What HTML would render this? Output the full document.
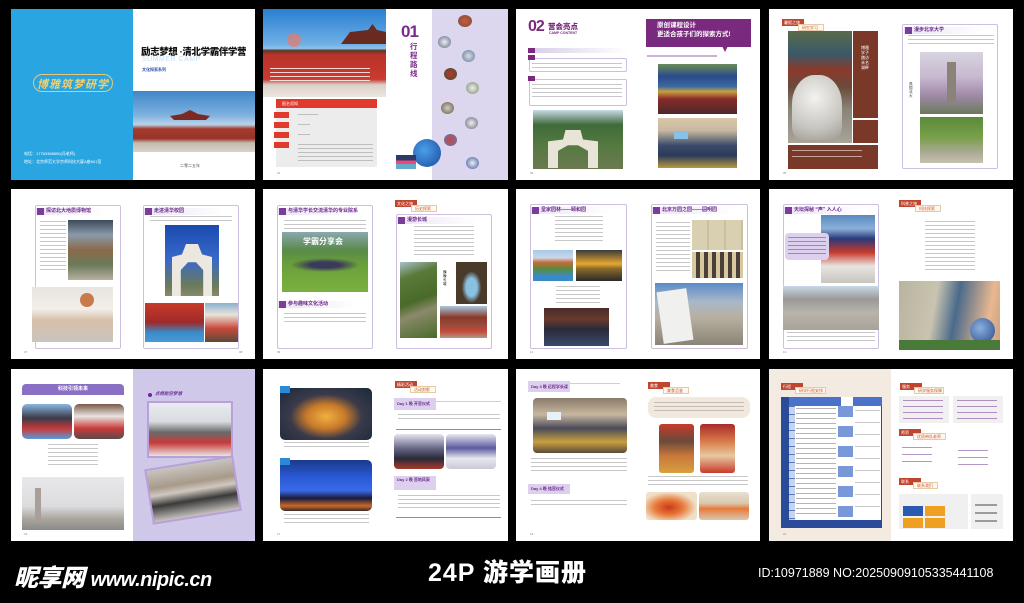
<!DOCTYPE html>
<html><head><meta charset="utf-8">
<style>
*{margin:0;padding:0;box-sizing:border-box}
body{width:1024px;height:603px;background:#000;position:relative;overflow:hidden;font-family:"Liberation Sans","Noto Sans CJK SC",sans-serif}
.a{position:absolute}
.pg{position:absolute;background:#fff}
.ln{position:absolute;background:repeating-linear-gradient(#999 0 1px,transparent 1px 4px);opacity:.55}
.fr{position:absolute;border:1px solid #cdbfe0;background:#fff;border-radius:2px}
.hd{position:absolute;height:7px;background:linear-gradient(90deg,#ece4f4,rgba(255,255,255,0));font-size:5px;line-height:7px;color:#6a2a8a;font-weight:bold;padding-left:10px;white-space:nowrap}
.hd:before{content:"";position:absolute;left:1px;top:0;width:7px;height:7px;background:#7a3e9a}
.tag{position:absolute;width:22px;height:7px;background:#c0452e;font-size:4px;color:#fff;line-height:7px;padding-left:2px}
.tag2{position:absolute;height:7px;border:1px solid #e7c9a6;background:#fff8ee;font-size:4px;color:#c06030;line-height:5px;padding-left:3px;width:26px}
.num{position:absolute;font-size:3px;color:#888}
.cn{font-family:"Liberation Sans","Noto Sans CJK SC",sans-serif}
</style></head><body>

<!-- S1 -->
<div class="pg" style="left:11px;top:9px;width:244px;height:171px"></div>
<div class="a" style="left:11px;top:9px;width:122px;height:171px;background:#29a6e1"></div>
<div class="a" style="left:33px;top:74px;width:80px;height:18px;border:1px solid #e8c878;border-radius:9px"></div>
<div class="a cn" style="left:37px;top:76px;width:72px;text-align:center;font-size:11px;color:#f5d06a;font-weight:bold;font-style:italic;letter-spacing:1px">博雅筑梦研学</div>
<div class="a cn" style="left:24px;top:150px;font-size:4px;color:#fff;line-height:8px">电话：17763388890(冯老师)<br>地址：北京师范大学京师科技大厦A座601室</div>
<div class="a cn" style="left:141px;top:44px;font-size:9.5px;font-weight:900;color:#111;white-space:nowrap;letter-spacing:-.4px">励志梦想 ·清北学霸伴学营</div>
<div class="a" style="left:142px;top:56px;font-size:7px;color:#c5dcf2;letter-spacing:.5px">SUMMER CAMP</div>
<div class="a cn" style="left:142px;top:67px;font-size:4px;color:#1f4fa8;font-weight:bold">文化探索系列</div>
<div class="a" style="left:133px;top:91px;width:122px;height:61px;background:linear-gradient(180deg,#3f86c8 0%,#7fb2de 40%,#b9d3ea 55%,#a43b2e 62%,#9a3328 78%,#c2bbb0 85%,#d8d2c8 100%)"></div>
<div class="a" style="left:170px;top:110px;width:40px;height:10px;background:#7a2a22;clip-path:polygon(10% 100%,0 60%,30% 40%,50% 0,70% 40%,100% 60%,90% 100%)"></div>
<div class="a cn" style="left:180px;top:163px;font-size:4px;color:#555">二零二五年</div>

<!-- S2 -->
<div class="pg" style="left:263px;top:9px;width:245px;height:171px"></div>
<div class="a" style="left:263px;top:9px;width:123px;height:88px;background:linear-gradient(180deg,#2a7fd0 0%,#6fb0e6 40%,#8fc2ea 45%,#5a3a2a 47%,#b8332a 52%,#cc3a2e 80%,#d9d0c8 86%,#ece6e0 100%)"></div>
<div class="a" style="left:341px;top:24px;width:45px;height:20px;background:#6b2a20;clip-path:polygon(0 100%,20% 40%,60% 30%,70% 0,80% 30%,100% 40%,100% 100%)"></div>
<div class="a" style="left:287px;top:33px;width:14px;height:14px;border-radius:50%;background:#e87a6a;opacity:.7"></div>
<div class="ln" style="left:270px;top:68px;width:100px;height:14px;background:repeating-linear-gradient(#fff 0 1px,transparent 1px 4px);opacity:.8"></div>
<div class="a" style="left:276px;top:99px;width:101px;height:9px;background:#e03a2c;font-size:4px;color:#fff;line-height:9px;padding-left:6px">报名须知</div>
<div class="a" style="left:276px;top:108px;width:101px;height:59px;background:#ececec"></div>
<div class="a" style="left:274px;top:112px;width:15px;height:6px;background:#e03a2c"></div>
<div class="a" style="left:274px;top:122px;width:15px;height:6px;background:#e03a2c"></div>
<div class="a" style="left:274px;top:132px;width:15px;height:6px;background:#e03a2c"></div>
<div class="a" style="left:274px;top:142px;width:15px;height:6px;background:#e03a2c"></div>
<div class="ln" style="left:298px;top:114px;width:20px;height:2px"></div>
<div class="ln" style="left:298px;top:124px;width:12px;height:2px"></div>
<div class="ln" style="left:298px;top:134px;width:12px;height:2px"></div>
<div class="ln" style="left:298px;top:144px;width:75px;height:20px"></div>
<div class="a" style="left:401px;top:22px;font-size:17px;font-weight:900;color:#7a2a8e;letter-spacing:-1px">01</div>
<div class="a cn" style="left:410px;top:42px;width:8px;font-size:7.5px;line-height:9px;font-weight:bold;color:#7a2a8e">行程路线</div>
<div class="a" style="left:432px;top:9px;width:76px;height:171px;background:#dcd6ee"></div>
<div class="a" style="left:458px;top:15px;width:14px;height:12px;border-radius:50%;background:radial-gradient(#c85a3a,#7a5040)"></div>
<div class="a" style="left:438px;top:36px;width:13px;height:12px;border-radius:50%;background:radial-gradient(#eee,#5a6a8a)"></div>
<div class="a" style="left:462px;top:50px;width:13px;height:12px;border-radius:50%;background:radial-gradient(#ddd,#5a7aa0)"></div>
<div class="a" style="left:444px;top:68px;width:13px;height:12px;border-radius:50%;background:radial-gradient(#b33,#3a5a2a)"></div>
<div class="a" style="left:466px;top:82px;width:13px;height:12px;border-radius:50%;background:radial-gradient(#eee,#7a8a6a)"></div>
<div class="a" style="left:441px;top:102px;width:13px;height:12px;border-radius:50%;background:radial-gradient(#ccc,#6a5a3a)"></div>
<div class="a" style="left:465px;top:117px;width:13px;height:12px;border-radius:50%;background:radial-gradient(#eee,#6a6a7a)"></div>
<div class="a" style="left:444px;top:134px;width:13px;height:12px;border-radius:50%;background:radial-gradient(#c44,#5a7ab0)"></div>
<div class="a" style="left:466px;top:157px;width:13px;height:12px;border-radius:50%;background:radial-gradient(#eee,#3a5aa0)"></div>
<div class="a" style="left:413px;top:139px;width:28px;height:28px;border-radius:50%;background:radial-gradient(circle at 40% 40%,#4aa0e8,#1a4aa0)"></div>
<div class="a" style="left:396px;top:155px;width:20px;height:14px;background:linear-gradient(#2a3a6a 0 40%,#e84a7a 40% 65%,#6ac 65%)"></div>

<!-- S3 -->
<div class="pg" style="left:516px;top:9px;width:244px;height:171px"></div>
<div class="a" style="left:528px;top:18px;font-size:16px;font-weight:900;color:#7a2a7e;letter-spacing:-1px">02</div>
<div class="a cn" style="left:548px;top:21px;font-size:7.5px;font-weight:900;color:#7a2a7e">营会亮点</div>
<div class="a" style="left:549px;top:31px;font-size:3.5px;font-weight:bold;color:#7a2a7e">CAMP CONTENT</div>
<div class="a" style="left:528px;top:48px;width:100px;height:5px;background:linear-gradient(90deg,#d8cce8,#fff)"></div>
<div class="a" style="left:528px;top:48px;width:7px;height:5px;background:#7a2a7e"></div>
<div class="fr" style="left:529px;top:58px;width:98px;height:14px"></div>
<div class="a" style="left:528px;top:55px;width:7px;height:5px;background:#7a2a7e"></div>
<div class="ln" style="left:532px;top:63px;width:90px;height:6px"></div>
<div class="fr" style="left:529px;top:79px;width:98px;height:27px"></div>
<div class="a" style="left:528px;top:76px;width:7px;height:5px;background:#7a2a7e"></div>
<div class="ln" style="left:532px;top:84px;width:90px;height:15px"></div>
<div class="a" style="left:533px;top:110px;width:90px;height:59px;background:linear-gradient(180deg,#c8dbe8 0%,#3f6a3a 25%,#557a40 60%,#6a7a50 100%)"></div>
<div class="a" style="left:548px;top:130px;width:50px;height:38px;background:#e8e4d8;clip-path:polygon(0 100%,0 30%,30% 25%,35% 0,65% 0,70% 25%,100% 30%,100% 100%,80% 100%,80% 55%,60% 40%,40% 40%,20% 55%,20% 100%)"></div>
<div class="a" style="left:646px;top:19px;width:105px;height:28px;background:#7a2a7e"></div>
<div class="a" style="left:722px;top:46px;width:6px;height:6px;background:#7a2a7e;clip-path:polygon(0 0,100% 0,50% 100%)"></div>
<div class="a cn" style="left:657px;top:21px;font-size:6.5px;line-height:9px;font-weight:bold;color:#fff">原创课程设计<br>更适合孩子们的探索方式!</div>
<div class="ln" style="left:647px;top:55px;width:70px;height:2px;background:#a070b8"></div>
<div class="a" style="left:658px;top:64px;width:79px;height:50px;background:linear-gradient(180deg,#6a8a5a 0%,#2a4a8a 25%,#3a6aa0 45%,#c8a040 55%,#8a2a2a 70%,#4a2a2a 100%)"></div>
<div class="a" style="left:658px;top:118px;width:79px;height:50px;background:linear-gradient(180deg,#d8c8a8 0%,#c8b8a0 25%,#3a4a6a 55%,#2a3a5a 75%,#b89a40 100%)"></div>
<div class="a" style="left:674px;top:132px;width:14px;height:7px;background:#8ac0e8"></div>

<!-- S4 -->
<div class="pg" style="left:769px;top:9px;width:244px;height:171px"></div>
<div class="tag" style="left:782px;top:19px">暑假之旅</div>
<div class="tag2" style="left:798px;top:24px">研究学习</div>
<div class="a" style="left:788px;top:31px;width:64px;height:112px;background:linear-gradient(180deg,#5a6a4a 0%,#3a5a6a 20%,#8a3a2a 35%,#6a4a3a 50%,#8a8478 70%,#a8a498 100%)"></div>
<div class="a" style="left:792px;top:75px;width:50px;height:65px;border-radius:45% 45% 20% 20%;background:radial-gradient(circle at 45% 35%,#f2f2f0,#c8c6c0 60%,#9a9890)"></div>
<div class="a" style="left:853px;top:31px;width:25px;height:87px;background:#7a3828"></div>
<div class="a cn" style="left:861px;top:45px;width:10px;font-size:4px;line-height:5px;color:#fff">博雅学子踏访未名湖畔</div>
<div class="a" style="left:853px;top:120px;width:25px;height:23px;background:#7a3828"></div>
<div class="a" style="left:788px;top:145px;width:90px;height:24px;background:#7a3828"></div>
<div class="ln" style="left:792px;top:150px;width:70px;height:8px;background:repeating-linear-gradient(#fff 0 1px,transparent 1px 6px)"></div>
<div class="fr" style="left:902px;top:24px;width:96px;height:145px"></div>
<div class="hd" style="left:904px;top:27px;width:80px">漫步北京大学</div>
<div class="ln" style="left:908px;top:35px;width:86px;height:10px"></div>
<div class="a" style="left:920px;top:52px;width:63px;height:62px;background:linear-gradient(180deg,#d8d4e0 0%,#c8b8d0 40%,#a08aa8 70%,#6a7a5a 100%)"></div>
<div class="a" style="left:947px;top:62px;width:9px;height:40px;background:#8a8478"></div>
<div class="a" style="left:920px;top:117px;width:63px;height:46px;background:linear-gradient(180deg,#5a8a3a 0%,#7aa04a 45%,#a8a890 75%,#c8c0b0 100%)"></div>
<div class="a cn" style="left:909px;top:82px;width:5px;font-size:3.5px;line-height:4px;color:#333">燕园北大</div>

<!-- S5 -->
<div class="pg" style="left:11px;top:189px;width:244px;height:170px"></div>
<div class="fr" style="left:35px;top:205px;width:86px;height:144px"></div>
<div class="hd" style="left:36px;top:208px;width:70px">探访北大地质博物馆</div>
<div class="ln" style="left:40px;top:221px;width:26px;height:52px"></div>
<div class="a" style="left:68px;top:220px;width:45px;height:60px;background:linear-gradient(180deg,#3a4a5a 0%,#8a9aa8 25%,#8a6a4a 50%,#6a7a5a 75%,#b8b0a0 100%)"></div>
<div class="a" style="left:32px;top:287px;width:81px;height:55px;background:linear-gradient(180deg,#e8e4e0 0%,#f2eeea 40%,#d8c0a8 60%,#c8c4c0 100%)"></div>
<div class="a" style="left:80px;top:293px;width:14px;height:14px;border-radius:50%;background:#c87a4a"></div>
<div class="fr" style="left:143px;top:205px;width:96px;height:144px"></div>
<div class="hd" style="left:144px;top:208px;width:80px">走进清华校园</div>
<div class="ln" style="left:150px;top:216px;width:82px;height:6px"></div>
<div class="a" style="left:165px;top:225px;width:54px;height:71px;background:linear-gradient(180deg,#1a4ab0 0%,#3a6ac8 50%,#6a7a5a 85%,#8a8a6a 100%)"></div>
<div class="a" style="left:172px;top:244px;width:40px;height:52px;background:#ece8e0;clip-path:polygon(0 100%,0 25%,25% 20%,35% 0,65% 0,75% 20%,100% 25%,100% 100%,78% 100%,78% 50%,60% 35%,40% 35%,22% 50%,22% 100%)"></div>
<div class="a" style="left:145px;top:303px;width:59px;height:39px;background:linear-gradient(180deg,#c83a2a 0%,#a02a2a 50%,#3a8ac8 75%,#4a9ad8 100%)"></div>
<div class="a" style="left:205px;top:303px;width:33px;height:39px;background:linear-gradient(180deg,#8ab0d0 0%,#e8e4d8 30%,#c84a3a 65%,#5a4a3a 100%)"></div>

<!-- S6 -->
<div class="pg" style="left:263px;top:189px;width:245px;height:170px"></div>
<div class="fr" style="left:277px;top:205px;width:96px;height:144px"></div>
<div class="hd" style="left:278px;top:208px;width:80px">与清华学长交流清华的专业院系</div>
<div class="ln" style="left:284px;top:220px;width:82px;height:9px"></div>
<div class="a" style="left:282px;top:232px;width:86px;height:60px;background:linear-gradient(180deg,#8aa8b0 0%,#5a8a4a 30%,#6aa03a 55%,#7ab040 100%)"></div>
<div class="a cn" style="left:303px;top:236px;font-size:8px;color:#fff;font-weight:bold">学霸分享会</div>
<div class="a" style="left:290px;top:258px;width:70px;height:14px;background:radial-gradient(ellipse,#3a3a5a 30%,rgba(0,0,0,0) 70%)"></div>
<div class="hd" style="left:278px;top:301px;width:80px">参与趣味文化活动</div>
<div class="ln" style="left:284px;top:313px;width:82px;height:12px"></div>
<div class="tag" style="left:395px;top:200px">文化之旅</div>
<div class="tag2" style="left:411px;top:205px">历史探索</div>
<div class="fr" style="left:396px;top:214px;width:96px;height:135px"></div>
<div class="hd" style="left:397px;top:217px;width:80px">漫游长城</div>
<div class="ln" style="left:414px;top:226px;width:60px;height:30px"></div>
<div class="a" style="left:400px;top:262px;width:37px;height:76px;background:linear-gradient(160deg,#a8c0c8 0%,#5a7a3a 20%,#4a6a2a 50%,#8a8a6a 65%,#4a6a2a 100%)"></div>
<div class="a" style="left:456px;top:262px;width:31px;height:42px;background:radial-gradient(ellipse at 50% 60%,#8ac0e0 25%,#4a3a2a 45%)"></div>
<div class="a" style="left:440px;top:306px;width:47px;height:32px;background:linear-gradient(180deg,#a8c8e0 0%,#8a3a2a 35%,#9a4a3a 60%,#c84a3a 80%,#a89a8a 100%)"></div>
<div class="a cn" style="left:443px;top:270px;width:5px;font-size:3.5px;line-height:4px">巍巍长城</div>

<!-- S7 -->
<div class="pg" style="left:516px;top:189px;width:244px;height:170px"></div>
<div class="fr" style="left:530px;top:204px;width:97px;height:145px"></div>
<div class="hd" style="left:531px;top:207px;width:80px">皇家园林——颐和园</div>
<div class="ln" style="left:555px;top:216px;width:48px;height:28px"></div>
<div class="a" style="left:533px;top:250px;width:40px;height:31px;background:linear-gradient(180deg,#a8c8e8 0%,#c8d8e8 25%,#c86a3a 40%,#5a8a3a 60%,#3a8ac8 85%)"></div>
<div class="a" style="left:576px;top:250px;width:46px;height:31px;background:linear-gradient(180deg,#3a3a3a 0%,#e8a830 45%,#8a6a2a 60%,#2a2a2a 100%)"></div>
<div class="ln" style="left:556px;top:286px;width:44px;height:18px"></div>
<div class="a" style="left:544px;top:308px;width:65px;height:38px;background:linear-gradient(180deg,#4a2a2a 0%,#6a3a2a 30%,#2a2a3a 55%,#3a4a6a 100%)"></div>
<div class="fr" style="left:651px;top:204px;width:97px;height:145px"></div>
<div class="hd" style="left:652px;top:207px;width:80px">北京万园之园——圆明园</div>
<div class="ln" style="left:656px;top:222px;width:34px;height:50px"></div>
<div class="a" style="left:692px;top:220px;width:51px;height:30px;background:repeating-linear-gradient(90deg,#d8d0b0 0 15px,#c8c0a0 15px 17px)"></div>
<div class="a" style="left:692px;top:252px;width:51px;height:26px;background:repeating-linear-gradient(90deg,#d8c8a0 0 4px,#4a4038 4px 8px)"></div>
<div class="a" style="left:655px;top:283px;width:88px;height:62px;background:linear-gradient(180deg,#5a8ac8 0%,#a8b8c8 30%,#b8b0a0 55%,#8a8478 100%)"></div>
<div class="a" style="left:660px;top:290px;width:30px;height:52px;background:#f0f0ee;transform:rotate(-8deg)"></div>

<!-- S8 -->
<div class="pg" style="left:769px;top:189px;width:244px;height:170px"></div>
<div class="fr" style="left:783px;top:204px;width:96px;height:145px"></div>
<div class="hd" style="left:784px;top:207px;width:80px">天坛探秘 “声” 入人心</div>
<div class="a" style="left:821px;top:215px;width:54px;height:68px;background:linear-gradient(180deg,#5a8ac0 0%,#8ab0d8 20%,#2a3a7a 35%,#c83a2a 55%,#e8e4e0 75%,#c8c4c0 100%)"></div>
<div class="a" style="left:785px;top:233px;width:44px;height:27px;background:#dcd0ee;border-radius:4px"></div>
<div class="ln" style="left:788px;top:237px;width:38px;height:18px;background:repeating-linear-gradient(#7a3e9a 0 1px,transparent 1px 4px)"></div>
<div class="a" style="left:783px;top:286px;width:96px;height:44px;background:linear-gradient(180deg,#c8d8e8 0%,#9a9a98 30%,#b8b4ac 60%,#a8a49c 100%)"></div>
<div class="ln" style="left:787px;top:332px;width:88px;height:12px"></div>
<div class="tag" style="left:899px;top:200px">科普之旅</div>
<div class="tag2" style="left:915px;top:205px">科技探索</div>
<div class="ln" style="left:925px;top:221px;width:50px;height:52px"></div>
<div class="a" style="left:899px;top:281px;width:101px;height:69px;background:linear-gradient(100deg,#b8b4a0 0%,#c8c4b0 35%,#4a6a8a 55%,#e8b890 85%,#c8a080 100%)"></div>
<div class="a" style="left:970px;top:318px;width:25px;height:25px;border-radius:50%;background:radial-gradient(circle at 40% 40%,#8ab0e0,#2a4a8a)"></div>
<div class="a" style="left:899px;top:340px;width:101px;height:10px;background:#4a7a3a"></div>

<!-- S9 -->
<div class="pg" style="left:11px;top:369px;width:244px;height:172px"></div>
<div class="a" style="left:133px;top:369px;width:122px;height:172px;background:#d0c8e8"></div>
<div class="a cn" style="left:22px;top:384px;width:102px;height:11px;background:#8a70c4;border-radius:4px 4px 0 0;color:#fff;font-size:5px;line-height:11px;text-align:center;font-weight:bold">科技引领未来</div>
<div class="a" style="left:22px;top:404px;width:50px;height:35px;border-radius:5px;background:linear-gradient(180deg,#8ab8e0 0%,#3a3a4a 40%,#c83a3a 70%,#5a9ad8 100%)"></div>
<div class="a" style="left:74px;top:404px;width:50px;height:35px;border-radius:5px;background:linear-gradient(180deg,#7a5a4a 0%,#e8e4e0 35%,#c83a3a 70%,#5a4a4a 100%)"></div>
<div class="ln" style="left:48px;top:444px;width:50px;height:24px"></div>
<div class="a" style="left:22px;top:477px;width:102px;height:53px;background:linear-gradient(180deg,#e8e8ea 0%,#dcdcde 55%,#a8a49c 80%,#8a8a88 100%)"></div>
<div class="a" style="left:35px;top:488px;width:6px;height:35px;background:#a8a098"></div>
<div class="a" style="left:148px;top:393px;width:4px;height:4px;border-radius:50%;background:#6a2a9a"></div>
<div class="a cn" style="left:155px;top:391px;font-size:4.5px;font-weight:bold;color:#6a2a9a;font-style:italic">点燃航空梦想</div>
<div class="a" style="left:147px;top:401px;width:86px;height:57px;background:#b8a0d8;padding:2px"><div style="width:100%;height:100%;background:linear-gradient(180deg,#e8ecf0 0%,#d8dce0 35%,#6a6a6a 55%,#c83a3a 75%,#e8e4e0 100%)"></div></div>
<div class="a" style="left:148px;top:462px;width:90px;height:56px;background:#b8a0d8;padding:2px;transform:rotate(-9deg)"><div style="width:100%;height:100%;background:linear-gradient(180deg,#c8c4c0 0%,#a89a8a 35%,#d0c8c0 50%,#3a3a3a 70%,#c8c4c0 100%)"></div></div>

<!-- S10 -->
<div class="pg" style="left:263px;top:369px;width:245px;height:172px"></div>
<div class="a" style="left:280px;top:388px;width:92px;height:52px;border-radius:5px;background:radial-gradient(ellipse at 50% 55%,#f0b040 0%,#c87a2a 30%,#3a3a4a 55%,#1a2a3a 100%)"></div>
<div class="a" style="left:280px;top:386px;width:10px;height:7px;background:#2a8ad8"></div>
<div class="ln" style="left:284px;top:442px;width:85px;height:7px"></div>
<div class="a" style="left:280px;top:460px;width:92px;height:51px;border-radius:5px;background:linear-gradient(180deg,#1a3a8a 0%,#2a5ad8 35%,#3a6ae8 60%,#1a1a3a 75%,#c86a2a 90%,#3a2a2a 100%)"></div>
<div class="a" style="left:280px;top:458px;width:10px;height:7px;background:#2a8ad8"></div>
<div class="ln" style="left:284px;top:514px;width:85px;height:11px"></div>
<div class="tag" style="left:395px;top:381px">精彩活动</div>
<div class="tag2" style="left:410px;top:386px">活动剪影</div>
<div class="a cn" style="left:394px;top:398px;width:42px;height:12px;background:#ddd0ee;font-size:4px;line-height:12px;color:#6a2a8a;padding-left:3px;font-weight:bold">Day 1 晚 开营仪式</div>
<div class="a" style="left:436px;top:401px;width:65px;height:1px;background:#d8c8e8"></div>
<div class="ln" style="left:398px;top:414px;width:102px;height:8px"></div>
<div class="a" style="left:396px;top:429px;width:105px;height:1px;background:#a878c8"></div>
<div class="a" style="left:394px;top:434px;width:50px;height:35px;border-radius:4px;background:linear-gradient(180deg,#e8e4f0 0%,#6a6a8a 40%,#2a2a3a 70%,#a83a2a 100%)"></div>
<div class="a" style="left:446px;top:434px;width:50px;height:35px;border-radius:4px;background:linear-gradient(180deg,#e8e8f0 0%,#5a5aa0 40%,#e8e8f0 70%,#c8c8d8 100%)"></div>
<div class="a cn" style="left:394px;top:476px;width:42px;height:14px;background:#ddd0ee;font-size:4px;line-height:6px;color:#6a2a8a;padding:1px 3px;font-weight:bold">Day 2 晚 营地风采</div>
<div class="ln" style="left:398px;top:495px;width:102px;height:15px"></div>
<div class="a" style="left:396px;top:517px;width:105px;height:1px;background:#a878c8"></div>

<!-- S11 -->
<div class="pg" style="left:516px;top:369px;width:244px;height:172px"></div>
<div class="a cn" style="left:528px;top:381px;width:42px;height:11px;background:#ddd0ee;font-size:4px;line-height:11px;color:#6a2a8a;padding-left:3px;font-weight:bold">Day 3 晚 远程学长课</div>
<div class="a" style="left:570px;top:383px;width:50px;height:1px;background:#d8c8e8"></div>
<div class="a" style="left:533px;top:398px;width:94px;height:55px;border-radius:4px;background:linear-gradient(180deg,#8a7a6a 0%,#c8b8a0 30%,#4a4a5a 55%,#c8a040 80%,#5a4a3a 100%)"></div>
<div class="a" style="left:547px;top:412px;width:14px;height:8px;background:#e8f0f8"></div>
<div class="ln" style="left:531px;top:458px;width:96px;height:14px"></div>
<div class="a cn" style="left:528px;top:484px;width:42px;height:10px;background:#ddd0ee;font-size:4px;line-height:10px;color:#6a2a8a;padding-left:3px;font-weight:bold">Day 4 晚 结营仪式</div>
<div class="ln" style="left:531px;top:500px;width:96px;height:8px"></div>
<div class="tag" style="left:648px;top:382px">美食</div>
<div class="tag2" style="left:663px;top:387px">美食品鉴</div>
<div class="a" style="left:648px;top:397px;width:102px;height:21px;background:#f2e8de;border-radius:8px"></div>
<div class="ln" style="left:654px;top:402px;width:90px;height:12px"></div>
<div class="a" style="left:659px;top:424px;width:35px;height:49px;border-radius:3px;background:linear-gradient(180deg,#c83a2a 0%,#6a4a3a 35%,#c8783a 65%,#d8a040 100%)"></div>
<div class="a" style="left:700px;top:424px;width:35px;height:49px;border-radius:3px;background:linear-gradient(180deg,#a82a2a 0%,#d87a4a 35%,#e8c8a0 65%,#c83a2a 100%)"></div>
<div class="ln" style="left:648px;top:476px;width:100px;height:10px"></div>
<div class="a" style="left:646px;top:492px;width:51px;height:28px;border-radius:3px;background:radial-gradient(ellipse at 45% 55%,#c83a1a 0%,#e87a3a 35%,#f0e0c8 70%)"></div>
<div class="a" style="left:699px;top:492px;width:50px;height:28px;border-radius:3px;background:linear-gradient(180deg,#e8e0d0 0%,#d8c8b0 40%,#e87a3a 60%,#d8c8b0 100%)"></div>

<!-- S12 -->
<div class="pg" style="left:769px;top:369px;width:244px;height:172px"></div>
<div class="a" style="left:769px;top:369px;width:122px;height:172px;background:#f3ebe1"></div>
<div class="tag" style="left:781px;top:383px">行程</div>
<div class="tag2" style="left:795px;top:387px;width:31px">研学行程安排</div>
<div class="a" style="left:781px;top:397px;width:101px;height:131px;background:#fff;border:1px solid #2a4a9a"></div>
<div class="a" style="left:781px;top:397px;width:101px;height:9px;background:#4a72c8"></div>
<div class="a" style="left:781px;top:397px;width:8px;height:131px;background:#2a4a9a"></div>
<div class="a" style="left:789px;top:406px;width:6px;height:115px;background:repeating-linear-gradient(#5a7ac8 0 1px,#c8d4ec 1px 8px)"></div>
<div class="a" style="left:838px;top:406px;width:15px;height:115px;background:repeating-linear-gradient(#7a98d8 0 11px,#fff 11px 13px,#fff 13px 20px)"></div>
<div class="a" style="left:841px;top:397px;width:12px;height:9px;background:#fff"></div>
<div class="ln" style="left:796px;top:408px;width:40px;height:110px;background:repeating-linear-gradient(#777 0 1px,transparent 1px 5px)"></div>
<div class="ln" style="left:855px;top:410px;width:25px;height:100px;background:repeating-linear-gradient(#999 0 1px,transparent 1px 12px)"></div>
<div class="a" style="left:781px;top:520px;width:101px;height:8px;background:#2a4a9a"></div>
<div class="tag" style="left:900px;top:383px">服务</div>
<div class="tag2" style="left:914px;top:387px;width:30px">研学服务保障</div>
<div class="a" style="left:899px;top:396px;width:50px;height:27px;background:#f0f0f0"></div>
<div class="a" style="left:953px;top:396px;width:50px;height:27px;background:#f0f0f0"></div>
<div class="ln" style="left:903px;top:400px;width:40px;height:20px;background:repeating-linear-gradient(#7a3e9a 0 1px,transparent 1px 6px)"></div>
<div class="ln" style="left:957px;top:400px;width:40px;height:20px;background:repeating-linear-gradient(#7a3e9a 0 1px,transparent 1px 6px)"></div>
<div class="tag" style="left:899px;top:429px">师资</div>
<div class="tag2" style="left:913px;top:433px;width:33px">优质带队老师</div>
<div class="ln" style="left:902px;top:447px;width:30px;height:20px;background:repeating-linear-gradient(#7a3e9a 0 1px,transparent 1px 7px)"></div>
<div class="ln" style="left:958px;top:450px;width:30px;height:20px;background:repeating-linear-gradient(#7a3e9a 0 1px,transparent 1px 7px)"></div>
<div class="tag" style="left:899px;top:478px">联系</div>
<div class="tag2" style="left:913px;top:482px;width:25px">联系我们</div>
<div class="a" style="left:899px;top:494px;width:69px;height:35px;background:#f0f0f0"></div>
<div class="a" style="left:971px;top:494px;width:32px;height:35px;background:#f0f0f0"></div>
<div class="a" style="left:903px;top:506px;width:20px;height:10px;background:#2a5ab0"></div>
<div class="a" style="left:925px;top:506px;width:20px;height:10px;background:#f0a020"></div>
<div class="a" style="left:903px;top:518px;width:20px;height:10px;background:#f0a020"></div>
<div class="a" style="left:925px;top:518px;width:20px;height:10px;background:#f0a020"></div>
<div class="ln" style="left:975px;top:504px;width:22px;height:20px;background:repeating-linear-gradient(#555 0 2px,transparent 2px 8px)"></div>

<div class="num" style="left:277px;top:171px">01</div><div class="num" style="left:530px;top:171px">03</div><div class="num" style="left:783px;top:171px">05</div>
<div class="num" style="left:24px;top:350px">07</div><div class="num" style="left:239px;top:350px">08</div><div class="num" style="left:277px;top:350px">09</div><div class="num" style="left:530px;top:350px">11</div><div class="num" style="left:783px;top:350px">13</div>
<div class="num" style="left:24px;top:532px">15</div><div class="num" style="left:277px;top:532px">17</div><div class="num" style="left:530px;top:532px">19</div><div class="num" style="left:783px;top:532px">21</div>

<!-- footer -->
<div class="a cn" style="left:14px;top:558px;font-size:24px;font-weight:900;font-style:italic;color:#fff;white-space:nowrap;letter-spacing:-.5px">昵享网 <span style="font-size:20px;font-family:'Liberation Sans Narrow','Liberation Sans',sans-serif">www.nipic.cn</span></div>
<div class="a cn" style="left:428px;top:553px;font-size:25px;font-weight:900;color:#fff;white-space:nowrap;letter-spacing:1px">24P 游学画册</div>
<div class="a" style="left:758px;top:566px;font-size:12.5px;color:#fff;white-space:nowrap;font-family:'Liberation Sans Narrow','Liberation Sans',sans-serif">ID:10971889 NO:20250909105335441108</div>
</body></html>
